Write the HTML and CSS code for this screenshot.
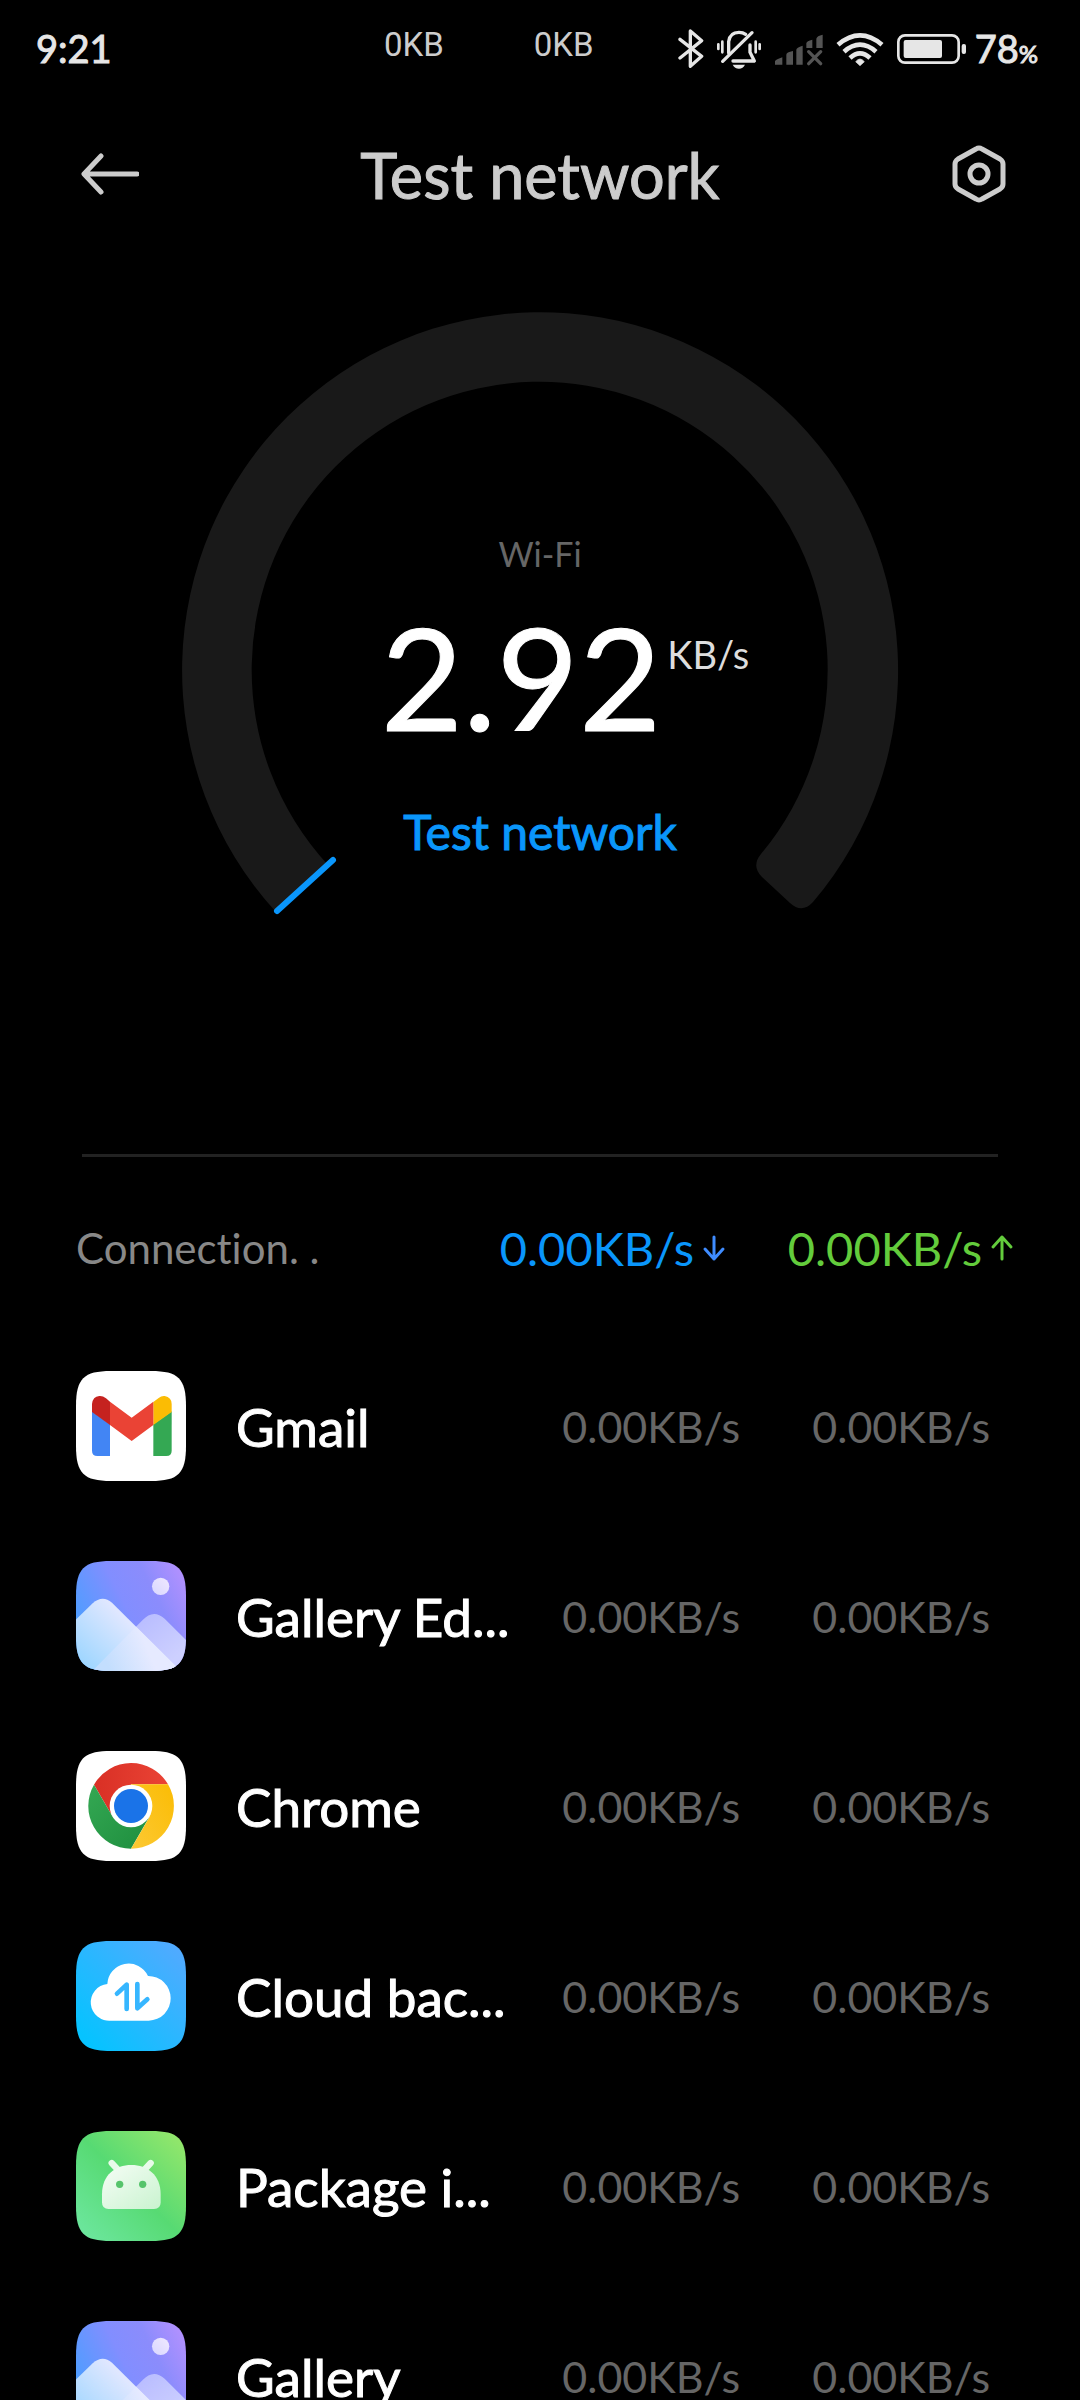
FILE: index.html
```html
<!DOCTYPE html>
<html lang="en">
<head>
<meta charset="utf-8">
<meta name="viewport" content="width=device-width, initial-scale=1">
<title>Test network</title>
<link rel="stylesheet" href="styles.css">
</head>
<body>
<svg class="defs" aria-hidden="true">
  <defs>
    <path id="tile" d="M48 168C48 86 71 63 153 63H273C355 63 378 86 378 168V288C378 370 355 393 273 393H153C71 393 48 370 48 288Z"/>
    <clipPath id="tile-clip"><use href="#tile"/></clipPath>
    <linearGradient id="sky-a" x1="0" y1=".5" x2="1" y2="0"><stop offset="0" stop-color="#4f9dff"/><stop offset=".4" stop-color="#828eff"/><stop offset=".65" stop-color="#8b8cfc"/><stop offset="1" stop-color="#bb92ff"/></linearGradient>
    <linearGradient id="hill-front" gradientUnits="userSpaceOnUse" x1="60" y1="380" x2="200" y2="240"><stop offset="0" stop-color="#9ad5ff"/><stop offset="1" stop-color="#e0e7ff"/></linearGradient>
    <linearGradient id="hill-back" gradientUnits="userSpaceOnUse" x1="250" y1="230" x2="350" y2="350"><stop offset="0" stop-color="#b9bdff"/><stop offset="1" stop-color="#cdd0ff"/></linearGradient>
    <linearGradient id="hill-glow" gradientUnits="userSpaceOnUse" x1="140" y1="370" x2="260" y2="320"><stop offset="0" stop-color="#c3defe"/><stop offset="1" stop-color="#e6eaff"/></linearGradient>
    <linearGradient id="sun" x1="0" y1="1" x2="1" y2="0"><stop offset="0" stop-color="#d8d6ff"/><stop offset="1" stop-color="#f0e9ff"/></linearGradient>
    <linearGradient id="cloud-bg" x1="0" y1="1" x2="1" y2="0"><stop offset=".1" stop-color="#06c3ff"/><stop offset="1" stop-color="#57a8ff"/></linearGradient>
    <linearGradient id="pkg-bg" x1="0" y1="1" x2="1" y2="0"><stop offset="0" stop-color="#6fe8a3"/><stop offset=".5" stop-color="#57da73"/><stop offset="1" stop-color="#9be86a"/></linearGradient>
    <linearGradient id="robot" x1="0" y1="0" x2="1" y2="1"><stop offset="0" stop-color="#f6fdf6"/><stop offset="1" stop-color="#c9f3cf"/></linearGradient>
    <linearGradient id="chrome-red" x1="0" y1="0" x2="1" y2="0"><stop offset="0" stop-color="#d93025"/><stop offset="1" stop-color="#ea4335"/></linearGradient>
    <linearGradient id="chrome-green" x1="0" y1="0" x2="1" y2="1"><stop offset="0" stop-color="#34a853"/><stop offset="1" stop-color="#1e8e3e"/></linearGradient>
    <linearGradient id="chrome-yellow" x1="0" y1="1" x2="1" y2="0"><stop offset="0" stop-color="#fcc934"/><stop offset="1" stop-color="#fbbc04"/></linearGradient>
    <g id="gallery-scene" clip-path="url(#tile-clip)">
      <rect x="48" y="63" width="330" height="330" fill="url(#sky-a)"/>
      <circle cx="302" cy="139" r="26" fill="url(#sun)"/>
      <path d="M90 400L248 240Q280 206 314 236L390 312V400Z" fill="url(#hill-back)"/>
      <path d="M40 246L98 190Q127 164 156 188L362 393V400H40Z" fill="url(#hill-front)"/>
      <path d="M90 400L228 260L362 393V400Z" fill="url(#hill-glow)"/>
    </g>
  </defs>
</svg>

<div class="screen">
  <div class="status">
    <span class="clock">9:21</span>
    <span class="traffic"><span>0KB</span><span>0KB</span></span>
    <span class="indicators">
      <svg width="26" height="45" viewBox="51 15 78 135" fill="none" stroke="#e6e6e6" stroke-width="10" stroke-linejoin="round" stroke-linecap="round" role="img" aria-label="Bluetooth"><path d="M57 55L122 106L88 136V30L122 59L57 111"/></svg>
      <svg width="46" height="45" viewBox="171 15 138 135" fill="none" stroke="#e6e6e6" stroke-width="10" stroke-linecap="round" role="img" aria-label="Vibrate only"><path d="M209 96V62Q212 34 240 34Q252 34 260 40M273 72V94L286 120H222" stroke-linejoin="round"/><path d="M191 121L279 35"/><path d="M178 70V84M190 62V94M290 62V94M302 70V84" stroke-width="8"/><path d="M221 131H258Q252 143 240 143Q227 143 221 131Z" fill="#e6e6e6" stroke="none"/></svg>
      <svg width="50" height="45" viewBox="345 15 150 135" fill="#545454" role="img" aria-label="No mobile signal"><path d="M348 131V121Q348 117 370 109V131ZM382 131V101Q382 94 402 90V131ZM412 131V86Q412 80 431 74V131ZM442 81V67Q443 60 460 56V81ZM472 81V53Q474 44 491 41V81Z"/><path d="M449 92L485 128M485 92L449 128" fill="none" stroke="#545454" stroke-width="10" stroke-linecap="round"/></svg>
      <svg width="48" height="45" viewBox="528 15 144 135" fill="none" stroke="#e6e6e6" stroke-width="14" role="img" aria-label="Wi-Fi connected"><path d="M534 71Q600 15 666 71"/><path d="M552 92Q600 50 648 92"/><path d="M570 111Q600 83 630 111"/><path d="M600 134L587 122Q600 106 613 122Z" fill="#e6e6e6" stroke="#e6e6e6" stroke-width="2"/></svg>
      <svg width="71" height="45" viewBox="711 15 213 135" role="img" aria-label="Battery"><rect x="718" y="43" width="181" height="82" rx="20" fill="none" stroke="#e6e6e6" stroke-width="8"/><rect x="734" y="57" width="115" height="54" rx="6" fill="#e6e6e6"/><rect x="908" y="69" width="13" height="30" rx="6" fill="#e6e6e6"/></svg>
    </span>
    <span class="battery">78<small>%</small></span>
  </div>

  <header class="bar">
    <button class="back" type="button" aria-label="Back">
      <svg width="65" height="60" viewBox="-5 0 65 60" fill="none" stroke="#ccc" stroke-width="5" stroke-linecap="round" stroke-linejoin="round"><path d="M22 12L5 30L22 48M6 30H58"/></svg>
    </button>
    <h1>Test network</h1>
    <button class="settings" type="button" aria-label="Settings">
      <svg width="57" height="60" viewBox="0 0 57 60" fill="none" stroke="#ccc" stroke-width="5" stroke-linejoin="round"><path d="M27 5Q30 3 33 5L51 15Q54 17 54 20V40Q54 43 51 45L33 55Q30 57 27 55L9 45Q6 43 6 40V20Q6 17 9 15Z"/><circle cx="30" cy="30" r="9"/></svg>
    </button>
  </header>

  <section class="gauge">
    <svg class="dial" viewBox="-360 -360 720 610" aria-hidden="true">
      <path d="M-264 242A358 358 0 1 1 273 232Q262 244 250 233L222 207Q211 196 221 184A288 288 0 1 0 -212 195Z" fill="#191919"/>
      <path d="M-207 190L-263 241" stroke="#0a96fb" stroke-width="6" stroke-linecap="round"/>
    </svg>
    <div class="reading">
      <p class="link-type">Wi-Fi</p>
      <p class="speed"><span class="speed-value">2.92</span><span class="speed-unit">KB/s</span></p>
      <button class="test" type="button">Test network</button>
    </div>
  </section>

  <main class="list">
    <table>
      <colgroup><col class="col-app"><col class="col-down"><col class="col-up"></colgroup>
      <thead>
        <tr>
          <th class="connections" scope="col">Connection. .</th>
          <th class="down" scope="col"><span class="rate">0.00KB/s<svg width="24" height="28" viewBox="0 0 24 28" fill="none" stroke="#3f8cff" stroke-width="3" stroke-linecap="round" stroke-linejoin="round"><path d="M12 3V25M3 15L12 25L21 15"/></svg></span></th>
          <th class="up" scope="col"><span class="rate">0.00KB/s<svg width="24" height="28" viewBox="0 0 24 28" fill="none" stroke="#63cc3c" stroke-width="3" stroke-linecap="round" stroke-linejoin="round"><path d="M12 25V3M3 13L12 3L21 13"/></svg></span></th>
        </tr>
      </thead>
      <tbody>
        <tr>
          <td><div class="app"><svg viewBox="48 63 330 330" aria-hidden="true"><use href="#tile" fill="#fff"/><path d="M96 184L150 223V318H112Q96 318 96 302Z" fill="#4285f4"/><path d="M335 184L280 223V318H319Q335 318 335 302Z" fill="#34a853"/><path d="M280 156L296 144Q304 137 314 138Q335 142 335 162V186L280 225Z" fill="#fbbc04"/><path d="M150 155L215 203L280 155V225L215 273L150 225Z" fill="#ea4335"/><path d="M96 186V162Q98 140 118 138Q128 137 138 145L150 155V225Z" fill="#c5221f"/></svg><span>Gmail</span></div></td>
          <td class="down">0.00KB/s</td><td class="up">0.00KB/s</td>
        </tr>
        <tr>
          <td><div class="app"><svg viewBox="48 63 330 330" aria-hidden="true"><use href="#gallery-scene"/></svg><span>Gallery Ed...</span></div></td>
          <td class="down">0.00KB/s</td><td class="up">0.00KB/s</td>
        </tr>
        <tr>
          <td><div class="app"><svg viewBox="48 63 330 330" aria-hidden="true"><use href="#tile" fill="#fff"/><path d="M102 164A128 128 0 0 1 324 163H213V228L158 260Z" fill="url(#chrome-red)"/><path d="M102 164L158 260L213 228L268 261L213 356A128 128 0 0 1 102 164Z" fill="url(#chrome-green)"/><path d="M213 163H324A128 128 0 0 1 213 356L269 260L213 228Z" fill="url(#chrome-yellow)"/><circle cx="213" cy="228" r="64" fill="#fff"/><circle cx="213" cy="228" r="51" fill="#1a73e8"/></svg><span>Chrome</span></div></td>
          <td class="down">0.00KB/s</td><td class="up">0.00KB/s</td>
        </tr>
        <tr>
          <td><div class="app"><svg viewBox="48 63 330 330" aria-hidden="true"><use href="#tile" fill="url(#cloud-bg)"/><path d="M153 302A55 55 0 0 1 142 192A64 64 0 0 1 264 168A67 67 0 0 1 266 302Z" fill="#fff"/><path d="M171 221L200 194V267M232 192V265L262 238" fill="none" stroke="#36b6ff" stroke-width="14" stroke-linecap="round" stroke-linejoin="round"/></svg><span>Cloud bac...</span></div></td>
          <td class="down">0.00KB/s</td><td class="up">0.00KB/s</td>
        </tr>
        <tr>
          <td><div class="app"><svg viewBox="48 63 330 330" aria-hidden="true"><use href="#tile" fill="url(#pkg-bg)"/><path d="M155 159L180 186M272 159L247 186" stroke="#e8fae9" stroke-width="19" stroke-linecap="round"/><path d="M126 253C126 195 166 165 214 165S302 195 302 253V277Q302 297 282 297H146Q126 297 126 277Z" fill="url(#robot)"/><circle cx="179" cy="223" r="11" fill="#56c46b"/><circle cx="248" cy="223" r="11" fill="#56c46b"/></svg><span>Package i...</span></div></td>
          <td class="down">0.00KB/s</td><td class="up">0.00KB/s</td>
        </tr>
        <tr>
          <td><div class="app"><svg viewBox="48 63 330 330" aria-hidden="true"><use href="#gallery-scene"/></svg><span>Gallery</span></div></td>
          <td class="down">0.00KB/s</td><td class="up">0.00KB/s</td>
        </tr>
      </tbody>
    </table>
  </main>
</div>
</body>
</html>
```
FILE: styles.css
```css
* {
  box-sizing: border-box;
}

body {
  margin: 0;
  background: #000;
  color: #fff;
  font-family: Lato, "Noto Sans", sans-serif;
  font-variant-ligatures: none;
}

h1,
p {
  margin: 0;
}

button {
  padding: 0;
  border: 0;
  background: none;
  color: inherit;
  font: inherit;
}

svg {
  display: block;
  flex: none;
}

.defs {
  position: absolute;
  width: 0;
  height: 0;
}

.screen {
  display: flex;
  flex-direction: column;
  height: 100vh;
  overflow: hidden;
}

/* Lato has no medium weight here, so a thin outline thickens the regular one */
.clock,
.battery,
.bar h1,
.speed-value,
.test,
.app {
  font-weight: 400;
  -webkit-text-stroke: 1px currentColor;
}

/* Status bar */
.status {
  display: flex;
  align-items: center;
  flex: none;
  height: 96px;
  padding: 0 42px 0 36px;
  color: #e6e6e6;
  font-size: 38px;
}

.clock {
  flex: 0 0 348px;
}

.traffic {
  display: flex;
  gap: 90px;
  padding-bottom: 8px;
  color: #ccc;
  font-family: Roboto, sans-serif;
  font-size: 33px;
  font-weight: 400;
}

.indicators {
  display: flex;
  gap: 12px;
  margin-left: auto;
}

.battery {
  margin-left: 8px;
}

.battery small {
  font-size: 24px;
}

/* Title bar */
.bar {
  display: grid;
  grid-template-columns: 1fr auto 1fr;
  align-items: center;
  flex: none;
  height: 156px;
  padding: 0 74px;
  color: #ccc;
}

.bar h1 {
  font-size: 63px;
}

.settings {
  justify-self: end;
}

.back {
  justify-self: start;
}

/* Speed dial */
.gauge {
  display: grid;
  justify-items: center;
  flex: none;
  margin: 58px 82px 0;
  padding-bottom: 234px;
  border-bottom: 3px solid #222;
}

.dial {
  grid-area: 1 / 1;
  width: 720px;
}

.reading {
  grid-area: 1 / 1;
  display: flex;
  flex-direction: column;
  align-items: center;
  padding-top: 220px;
}

.link-type {
  color: #666;
  font-size: 34px;
  line-height: 48px;
}

.speed {
  display: flex;
  gap: 6px;
  padding: 18px 0 0 50px;
}

.speed-value {
  font-size: 142px;
  line-height: 160px;
}

.speed-unit {
  padding-top: 34px;
  color: #ddd;
  font-size: 38px;
  line-height: 48px;
}

.test {
  margin-top: 46px;
  color: #0a96fb;
  font-size: 48px;
  line-height: 60px;
}

/* Per-app traffic */
.list {
  flex: 1;
  min-height: 0;
  padding: 0 66px 0 76px;
  overflow: hidden;
}

table {
  width: 100%;
  border-collapse: collapse;
  table-layout: fixed;
}

.col-down {
  width: 250px;
}

.col-up {
  width: 274px;
}

th,
td {
  padding: 0;
  font-weight: 400;
  text-align: left;
  white-space: nowrap;
}

th {
  height: 174px;
  padding-top: 8px;
  font-size: 47px;
}

th.connections {
  color: #888;
  font-size: 42px;
}

th.down {
  padding-right: 14px;
  color: #0a96fb;
}

th.up {
  color: #63cc3c;
}

.rate {
  display: flex;
  align-items: center;
  justify-content: flex-end;
  gap: 8px;
}

td {
  height: 190px;
}

td.down,
td.up {
  color: #666;
  font-size: 43px;
  text-align: right;
}

td.up {
  padding-right: 24px;
}

.app {
  display: flex;
  align-items: center;
  gap: 50px;
  font-size: 53px;
}

.app svg {
  width: 110px;
  height: 110px;
}
```
